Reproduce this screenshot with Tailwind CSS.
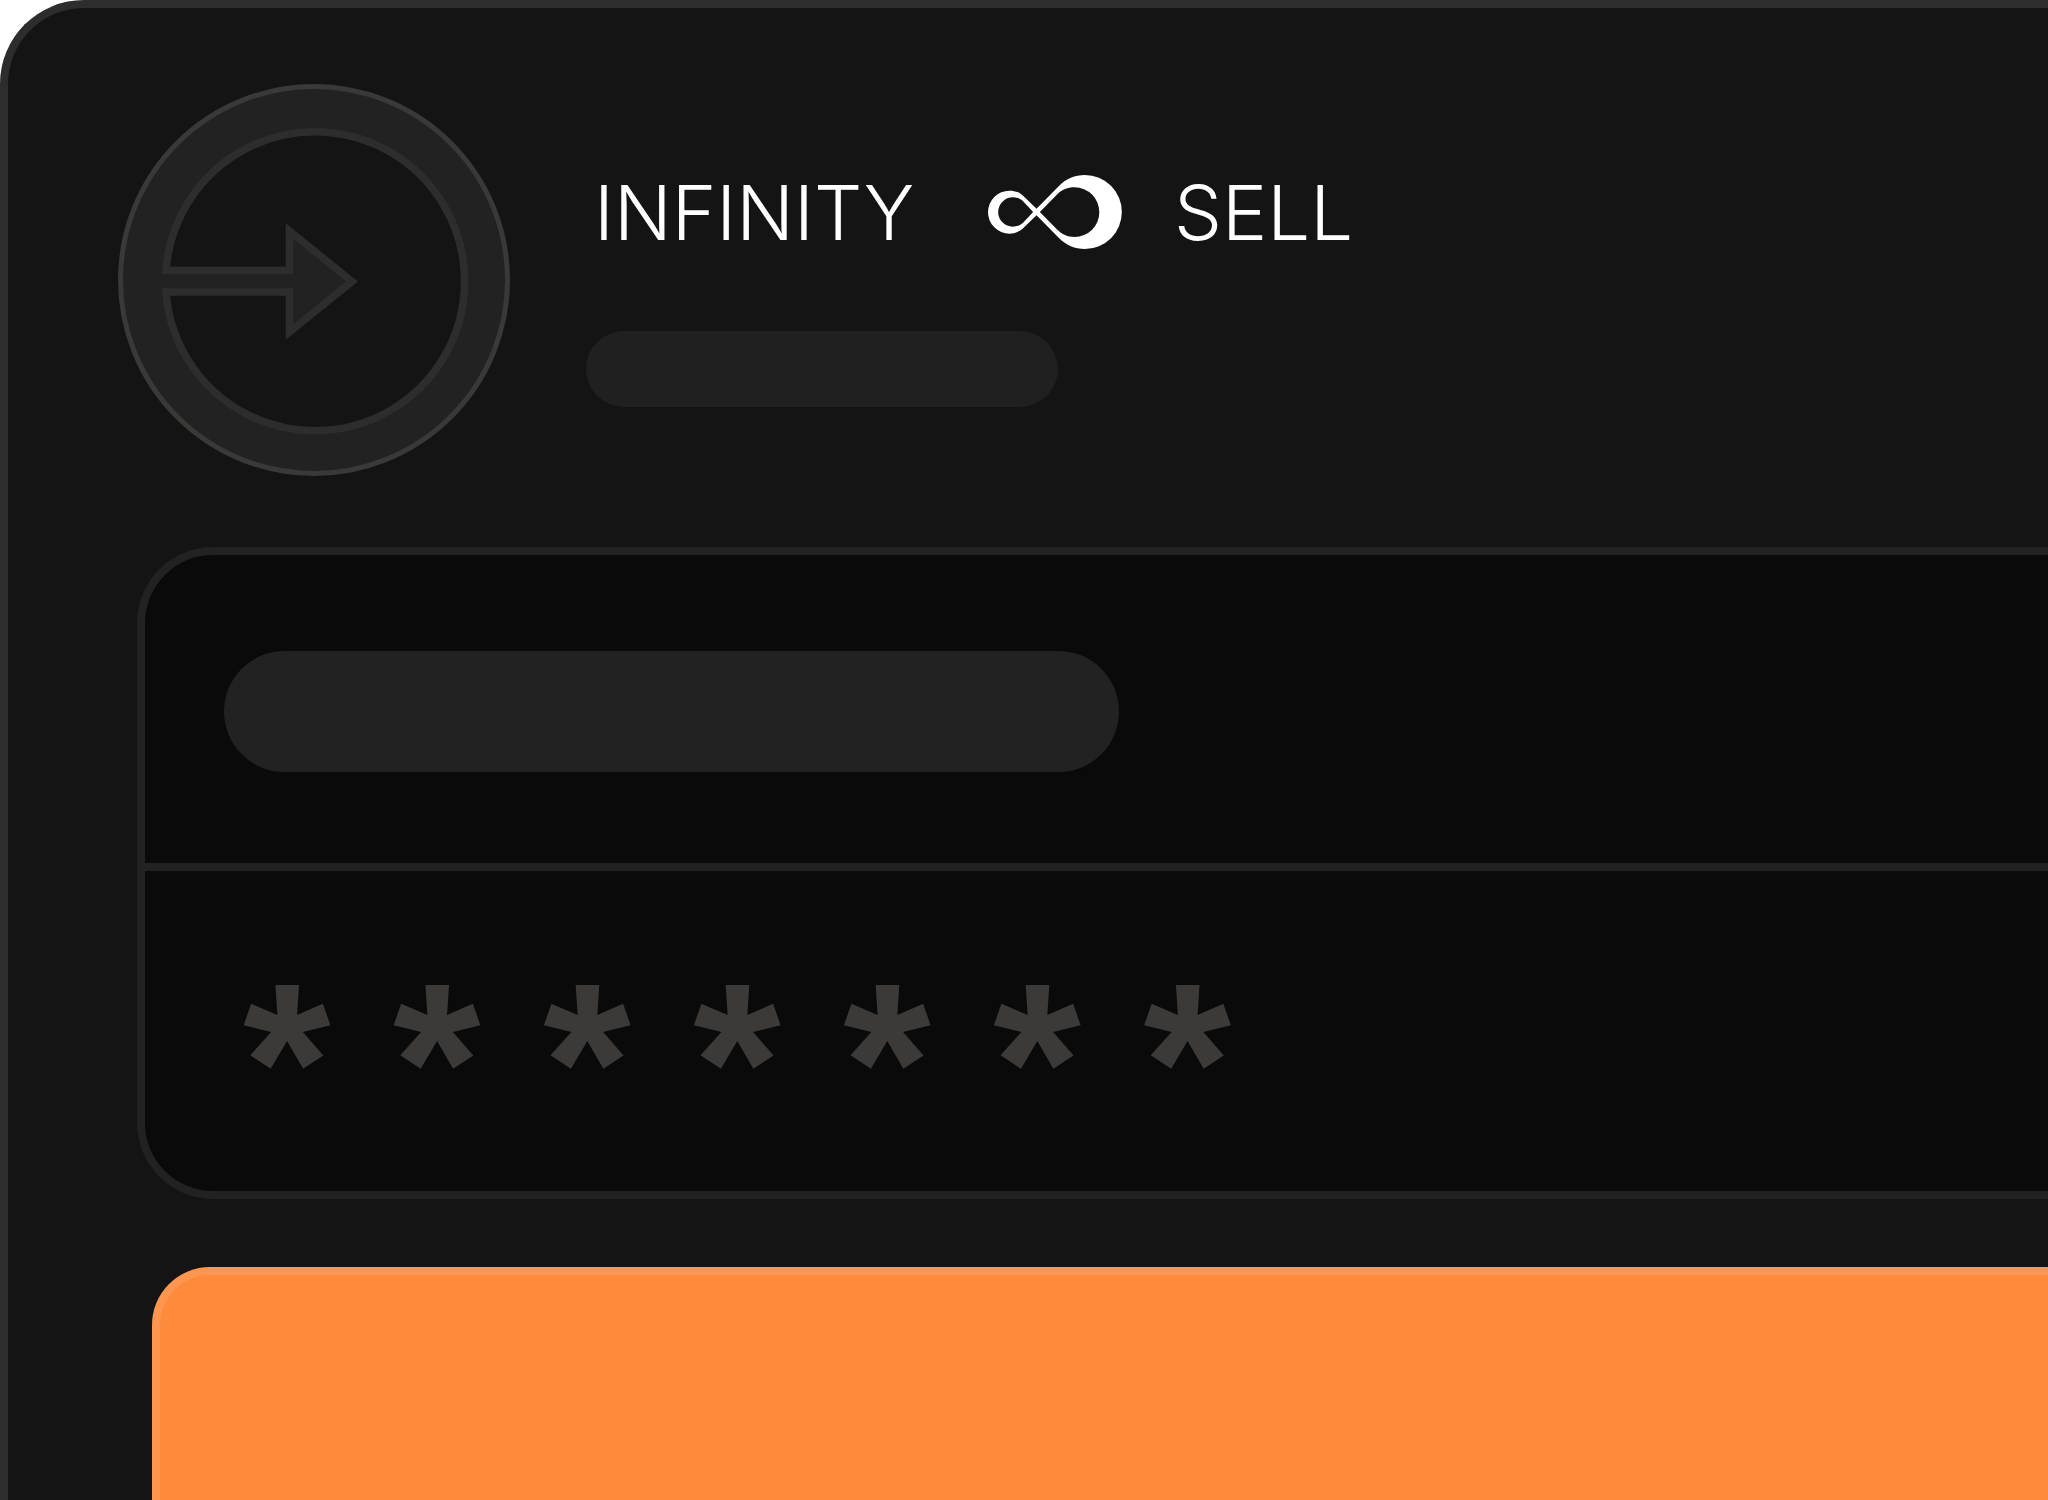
<!DOCTYPE html>
<html lang="en">
<head>
	<meta charset="UTF-8" />
	<meta name="viewport" content="width=device-width, initial-scale=1.0" />
	<script src="https://cdn.jsdelivr.net/npm/@tailwindcss/browser@4"></script>
	<title>Infinity Sell</title>
</head>

<body class="bg-white">
	<main class="flex h-screen flex-col overflow-hidden rounded-tl-[84px] border-t-8 border-l-8 border-[#2d2d2d] bg-[#141414] pt-[76px]">
		<header class="flex gap-[76px] pl-[110px]">
			<!-- login icon -->
			<svg class="size-[392px] shrink-0" viewBox="0 0 392 392" aria-hidden="true">
				<circle cx="196" cy="196" r="193.5" fill="#222222" stroke="#3a3938" stroke-width="5" />
				<path d="M48 186.5 A149.5 149.5 0 1 1 48 208 H171.5 V248 L234 197.5 L171.5 147 V186.5 Z" fill="#141414" stroke="#2d2d2d" stroke-width="7.5" />
			</svg>

			<div class="pt-[88px]">
				<h1 class="flex h-20 items-center font-[Inter] text-[76px] leading-none font-light text-white">
					<span class="w-[402px] pl-2">INFINITY</span>
					<svg class="h-[74px] w-[134px] shrink-0" viewBox="0 0 401 222" fill="#fff" fill-rule="evenodd" aria-hidden="true">
						<path d="M64 47 C82 47 96 53 108 65 L145 101 L213 32 C234 11 260 0 290 0 A111 111 0 0 1 290 222 C260 222 234 211 213 190 L145 121 L108 157 C96 169 82 176 64 176 A64.500 64.500 0 0 1 64 47 Z
							M74 67 A44 44 0 0 0 74 155 C87 155 97 151 106 142 L135 111 L106 80 C97 71 87 67 74 67 Z
							M155 111 L206 163 C222 179 238 186 259 186 A74.500 74.500 0 0 0 259 37 C238 37 222 43 206 59 Z" />
					</svg>
					<span class="pl-[52px]">SELL</span>
				</h1>
				<div class="mt-[79px] h-[76px] w-[472px] rounded-full bg-[#202020]"></div>
			</div>
		</header>

		<form class="mt-[71px] flex grow flex-col pl-[129px]">
			<div class="rounded-l-[76px] border-y-8 border-l-8 border-[#222222] bg-[#0a0a0a]">
				<div class="flex h-[308px] items-center pt-1 pl-[79px]">
					<div class="h-[121px] w-[895px] rounded-full bg-[#222222]"></div>
				</div>
				<div class="border-t-8 border-[#222222]">
					<input name="password" type="text" value="* * * * * * *" autocomplete="off" aria-label="Password" class="block h-80 w-full bg-transparent pt-[62px] pl-[98px] font-['Liberation_Sans'] text-[225px] leading-none font-bold text-[#3c3a38] outline-none" />
				</div>
			</div>
			<button type="button" aria-label="Log in" class="mt-[68px] ml-[15px] grow rounded-tl-[58px] border-t-8 border-l-8 border-[#ff964f] bg-[#fe8a3c]"></button>
		</form>
	</main>
</body>

</html>
